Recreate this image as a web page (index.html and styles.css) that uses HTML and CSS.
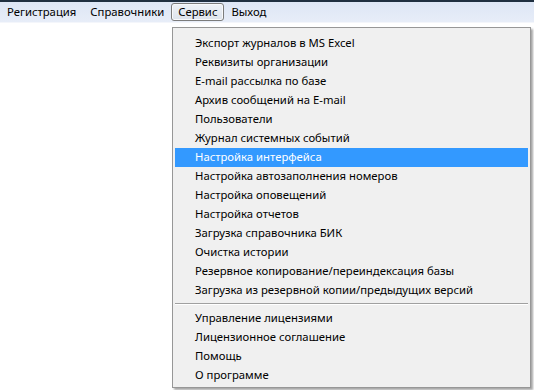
FILE: index.html
```html
<!DOCTYPE html>
<html lang="ru">
<head>
<meta charset="utf-8">
<link rel="stylesheet" href="styles.css">
</head>
<body>
<div class="topline"></div>
<nav class="menubar">
  <span class="mb-item">Регистрация</span>
  <span class="mb-item">Справочники</span>
  <span class="mb-item active">Сервис</span>
  <span class="mb-item">Выход</span>
</nav>
<div class="dropdown">
  <div class="dd-item">Экспорт журналов в MS Excel</div>
  <div class="dd-item">Реквизиты организации</div>
  <div class="dd-item">E-mail рассылка по базе</div>
  <div class="dd-item">Архив сообщений на E-mail</div>
  <div class="dd-item">Пользователи</div>
  <div class="dd-item">Журнал системных событий</div>
  <div class="dd-item selected">Настройка интерфейса</div>
  <div class="dd-item">Настройка автозаполнения номеров</div>
  <div class="dd-item">Настройка оповещений</div>
  <div class="dd-item">Настройка отчетов</div>
  <div class="dd-item">Загрузка справочника БИК</div>
  <div class="dd-item">Очистка истории</div>
  <div class="dd-item">Резервное копирование/переиндексация базы</div>
  <div class="dd-item">Загрузка из резервной копии/предыдущих версий</div>
  <div class="dd-sep"></div>
  <div class="dd-item">Управление лицензиями</div>
  <div class="dd-item">Лицензионное соглашение</div>
  <div class="dd-item">Помощь</div>
  <div class="dd-item">О программе</div>
</div>
</body>
</html>
```
FILE: styles.css
```css
html, body {
  margin: 0;
  padding: 0;
  background: #ffffff;
  font-family: "Noto Sans", "Open Sans", sans-serif;
  font-size: 11.3px;
  color: #000;
}
.topline {
  height: 2px;
  background: #1f2f40;
}
.menubar {
  display: flex;
  align-items: center;
  height: 19px;
  padding-bottom: 1px;
  background: linear-gradient(#dde6f5, #e7edf8);
  border-bottom: 1px solid #f4f6fb;
}
.mb-item {
  padding: 0 6px;
  line-height: 16px;
  border: 1px solid transparent;
  border-radius: 3px;
}
.mb-item.active {
  border-color: #7c7c7c;
  background: linear-gradient(#eef1f6, #dde3ec);
  box-shadow: inset 0 0 0 1px #f8f9fb;
}
.dropdown {
  position: absolute;
  left: 172px;
  top: 27px;
  width: 353px;
  padding: 6px 2px 2px 2px;
  background: #f0f0f0;
  border: 1px solid #979797;
  box-shadow: 2px 2px 2px rgba(0,0,0,0.35);
}
.dd-item {
  height: 19px;
  line-height: 18px;
  padding-bottom: 1px;
  box-sizing: border-box;
  padding-left: 20px;
  white-space: nowrap;
}
.dd-item.selected {
  background: #3399ff;
  color: #ffffff;
}
.dd-sep {
  height: 1px;
  margin: 3px 0 4px 0;
  background: #a0a0a0;
  border-bottom: 1px solid #ffffff;
}
```
